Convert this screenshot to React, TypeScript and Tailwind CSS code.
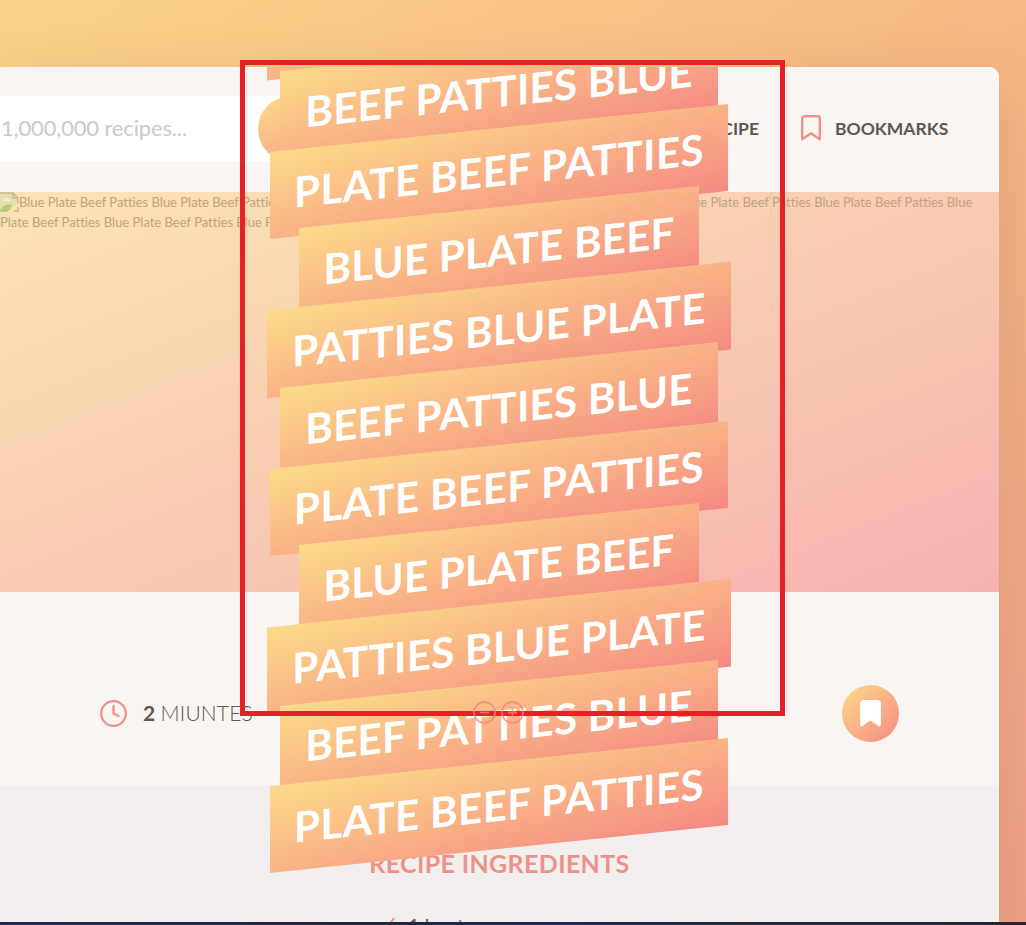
import React from "react";

const PATTIES_BLUE = { text: "PATTIES BLUE PLATE", box: "w-[464px]", track: "tracking-[0.3px]" };
const BEEF_PATTIES = { text: "BEEF PATTIES BLUE", box: "w-[438px]", track: "tracking-[0.25px]" };
const PLATE_BEEF = { text: "PLATE BEEF PATTIES", box: "w-[458px]", track: "tracking-[0.4px]" };
const BLUE_PLATE = { text: "BLUE PLATE BEEF", box: "w-[400px]", track: "tracking-[0.25px]" };

const ribbons = [
  PATTIES_BLUE,
  BEEF_PATTIES,
  PLATE_BEEF,
  BLUE_PLATE,
  PATTIES_BLUE,
  BEEF_PATTIES,
  PLATE_BEEF,
  BLUE_PLATE,
  PATTIES_BLUE,
  BEEF_PATTIES,
  PLATE_BEEF,
];

const phrase = "Blue Plate Beef Patties ";

function Bookmark({ className, filled }: { className: string; filled?: boolean }) {
  return (
    <svg viewBox="0 0 20 26" className={className} fill={filled ? "currentColor" : "none"} stroke="currentColor" strokeWidth="2.4" strokeLinejoin="round">
      <path d="M1.2 3.4q0-2.2 2.2-2.2h13.2q2.2 0 2.2 2.2v20.800L10 18.200 1.2 24.2z" />
    </svg>
  );
}

function BrokenImage() {
  return (
    <svg viewBox="0 0 19 20" className="h-5 w-[19px] shrink-0" fill="none">
      <path d="M0 1h13l5 5v8l-6 5H0z" fill="#e3dfb0" />
      <path d="M0 18c3-5 8-7 12-5l-3 6H0z" fill="#b9cd78" />
      <path d="M3 9c0-3 6-4 7 0z" fill="#f6efcf" />
      <path d="M0 1h13l5 5v6M13 1v5h5M0 19h8M14 19h4v-4" stroke="#c9b78c" strokeWidth="1.4" />
      <path d="M8 19.5L18.5 10.500v3L12 19.500z" fill="#fae3ac" />
    </svg>
  );
}

function Header() {
  return (
    <header className="flex h-[125px] items-center bg-[#f9f5f3] pb-px">
      <div className="flex h-[66px] w-[430px] items-center bg-white">
        <span className="w-[258px] shrink-0 whitespace-nowrap pb-[3px] pl-[1px] text-[22px] tracking-[-0.15px] text-[#d3c7c3]">1,000,000 recipes...</span>
        <div className="h-[66px] w-[172px] shrink-0 rounded-full bg-gradient-to-br from-[#fbdb89] to-[#f48982]" />
      </div>
      <nav className="ml-auto flex items-center pr-[50px] text-[17.5px] font-bold text-[#615551]">
        <span className="mr-[42px] whitespace-nowrap">ADD RECIPE</span>
        <Bookmark className="mb-[2px] mr-[14px] h-[26px] w-[20px] text-[#ee9289]" />
        <span className="w-[114px] whitespace-nowrap">BOOKMARKS</span>
      </nav>
    </header>
  );
}

function Details() {
  return (
    <section className="flex h-[193px] items-center pl-[100px] pr-[100px] pt-[50px] text-[#615551]">
      <svg viewBox="0 0 28 28" className="h-7 w-7" fill="none" stroke="#ee9289" strokeWidth="2.3" strokeLinecap="round">
        <circle cx="13.500" cy="13.500" r="12.300" />
        <path d="M13.500 6v7.500l5 2.500" />
      </svg>
      <div className="ml-[15px] whitespace-nowrap pb-px text-[21px]">
        <b>2</b> <span className="font-light tracking-[0.15px]">MIUNTES</span>
      </div>
      <div className="relative z-10 ml-auto mr-[318px] flex gap-[5px] pb-[3px]">
        <svg viewBox="0 0 23 23" className="h-[23px] w-[23px]" fill="none" stroke="#f0877f" strokeWidth="1.8" opacity="0.75">
          <circle cx="11.500" cy="11.500" r="10.500" />
          <path d="M7 11.500h9" />
        </svg>
        <svg viewBox="0 0 23 23" className="h-[23px] w-[23px]" fill="none" stroke="#f0877f" strokeWidth="1.8" opacity="0.75">
          <circle cx="11.500" cy="11.500" r="10.500" />
          <path d="M7 11.500h9M11.500 7v9" />
        </svg>
      </div>
      <div className="flex h-[57px] w-[57px] items-center justify-center rounded-full bg-gradient-to-br from-[#fbdb89] to-[#f48982] text-white">
        <Bookmark filled className="h-[27px] w-[21px]" />
      </div>
    </section>
  );
}

export default function App() {
  return (
    <div className="relative flex h-[925px] w-[1026px] flex-col overflow-hidden bg-[linear-gradient(145deg,#fbd289_0%,#f7b583_50%,#f0a086_100%)] font-['Lato','Open_Sans',sans-serif]">
      <main className="relative mt-[67px] h-[855px] w-[999px] shrink-0 overflow-hidden rounded-tr-[10px] bg-[#f9f5f3] shadow-[0_20px_60px_5px_rgba(97,85,81,0.16)]">
        <Header />
        <figure className="h-[400px] bg-[linear-gradient(to_bottom_right,#fae4b2,#f7b2b1)] text-[13px] leading-5 tracking-[-0.005px] text-[#c0a27f]">
          <div className="flex whitespace-nowrap">
            <BrokenImage />
            <span>{phrase.repeat(7)}Blue</span>
          </div>
          <div className="whitespace-nowrap">Plate Beef Patties {phrase.repeat(3)}</div>
        </figure>
        <Details />
        <section className="flex h-[137px] flex-col items-center bg-[#f2efee] pt-[60px] text-[#615551]">
          <h2 className="whitespace-nowrap text-[25px] font-bold leading-9 tracking-[0.35px] text-[#ee9289]">RECIPE INGREDIENTS</h2>
          <div className="mr-[158px] mt-[32px] flex items-center gap-[11px] whitespace-nowrap text-xl leading-6">
            <svg viewBox="0 0 20 20" className="h-5 w-5" fill="none" stroke="#ee9289" strokeWidth="2">
              <path d="M3 10l5 5 9-12" />
            </svg>
            <span>1 beet</span>
          </div>
        </section>
        <h1 className="absolute left-[267px] top-[-98px] flex w-[464px] -skew-y-6 flex-col items-center text-[42px] font-bold text-white">
          {ribbons.map((r, i) => (
            <span
              key={i}
              className={`mb-[-8.1px] flex h-[87.4px] shrink-0 items-center justify-center whitespace-nowrap bg-gradient-to-br from-[#fbdb89] to-[#f48982] pb-px ${r.box} ${r.track}`}
            >
              {r.text}
            </span>
          ))}
        </h1>
      </main>
      <div className="h-[3px] shrink-0 bg-[linear-gradient(to_right,#15295c,#1b1f3a_35%,#13265e_55%,#1c2434_75%,#1c2434)]" />
      <div className="absolute left-[240px] top-[60px] h-[656px] w-[545px] border-[5px] border-[#e81f26]" />
    </div>
  );
}
